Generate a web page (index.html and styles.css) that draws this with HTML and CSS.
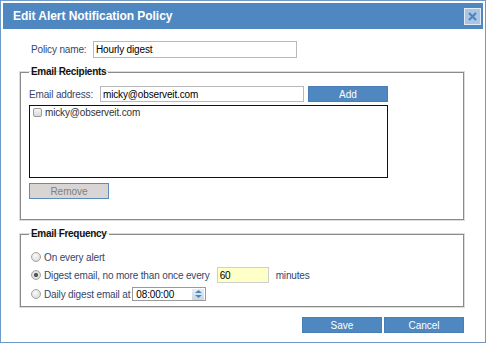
FILE: index.html
```html
<!DOCTYPE html>
<html lang="en">
<head>
    <meta charset="UTF-8">
    <title>Edit Alert Notification Policy</title>
    <link rel="stylesheet" href="styles.css">
</head>
<body>

    <div class="dialog">
        <div class="dialog-header">
            <span class="dialog-title">Edit Alert Notification Policy</span>
            <button class="close-btn" title="Close">
                <svg width="9" height="9" viewBox="0 0 9 9"><path d="M1 1 L8 8 M8 1 L1 8" stroke="#4a86c2" stroke-width="2.2"/></svg>
            </button>
        </div>

        <div class="dialog-body">
            <div class="policy-row">
                <label for="policy-name">Policy name:</label>
                <input type="text" id="policy-name" class="text-input policy-input" value="Hourly digest">
            </div>

            <fieldset class="group">
                <legend>Email Recipients</legend>
                <div class="email-row">
                    <label for="email">Email address:</label>
                    <input type="text" id="email" class="text-input email-input" value="micky@observeit.com">
                    <button class="btn add-btn">Add</button>
                </div>
                <div class="recipient-list">
                    <label class="recipient">
                        <input type="checkbox" class="check">
                        <span>micky@observeit.com</span>
                    </label>
                </div>
                <button class="btn-disabled">Remove</button>
            </fieldset>

            <fieldset class="group freq-group">
                <legend>Email Frequency</legend>
                <label class="radio-row">
                    <input type="radio" name="freq" class="radio">
                    <span>On every alert</span>
                </label>
                <label class="radio-row">
                    <input type="radio" name="freq" class="radio" checked>
                    <span>Digest email, no more than once every</span>
                    <input type="text" class="text-input minutes-input" value="60">
                    <span class="unit">minutes</span>
                </label>
                <label class="radio-row daily-row">
                    <input type="radio" name="freq" class="radio">
                    <span>Daily digest email at</span>
                    <span class="time-input">
                        <span class="time-value">08:00:00</span>
                        <span class="spinner">
                            <svg width="9" height="10" viewBox="0 0 9 10"><path d="M4.5 1 L8 4 L1 4 Z M4.5 9 L8 6 L1 6 Z" fill="#4a86c2"/></svg>
                        </span>
                    </span>
                </label>
            </fieldset>

            <div class="dialog-actions">
                <button class="btn">Save</button>
                <button class="btn">Cancel</button>
            </div>
        </div>
    </div>

</body>
</html>
```

FILE: styles.css
```css
body {
    margin: 0;
    font-family: "Liberation Sans", Arial, sans-serif;
    font-size: 10px;
    letter-spacing: -0.15px;
    color: #34466a;
    background-color: #ffffff;
}

.dialog {
    width: 486px;
    height: 343px;
    box-sizing: border-box;
    border: 1px solid #6e9acb;
    padding: 2px;
    background-color: #ffffff;
}

.dialog-header {
    height: 26px;
    display: flex;
    align-items: center;
    justify-content: space-between;
    padding: 0 2px 0 10px;
    background-color: #4f88c0;
}

.dialog-title {
    color: #ffffff;
    font-size: 12px;
    font-weight: bold;
    letter-spacing: -0.05px;
}

.close-btn {
    width: 17px;
    height: 17px;
    padding: 0;
    display: flex;
    align-items: center;
    justify-content: center;
    border: 1px solid #e3ecf6;
    background-color: #a9c6e4;
    cursor: pointer;
}

.dialog-body {
    padding: 12px 19px 0 17px;
}

.policy-row {
    display: flex;
    align-items: center;
    height: 17px;
    padding-left: 11px;
}

.policy-row label {
    width: 62px;
}

.text-input {
    box-sizing: border-box;
    height: 17px;
    padding: 0 2px;
    border: 1px solid #b9b9b9;
    font-family: "Liberation Sans", Arial, sans-serif;
    font-size: 10px;
    letter-spacing: -0.15px;
    color: #000000;
    outline: none;
}

.policy-input {
    width: 204px;
}

.group {
    margin: 8px 0 0;
    padding: 8px 8px 20px;
    border: 1px solid #8a8a8a;
    box-shadow: 0 0 0 1px #dcdcdc;
    min-inline-size: 0;
}

.group legend {
    padding: 0 2px;
    font-weight: bold;
    letter-spacing: -0.3px;
    color: #111111;
    line-height: 12px;
}

.email-row {
    display: flex;
    align-items: center;
    height: 16px;
}

.email-row label {
    width: 71px;
}

.email-input {
    width: 204px;
    height: 16px;
}

.btn {
    height: 16px;
    width: 80px;
    padding: 0;
    border: 1px solid #4a7fb5;
    background-color: #4f88c0;
    color: #ffffff;
    font-family: "Liberation Sans", Arial, sans-serif;
    font-size: 10px;
    cursor: pointer;
}

.add-btn {
    margin-left: 4px;
}

.recipient-list {
    width: 359px;
    height: 73px;
    box-sizing: border-box;
    margin-top: 3px;
    border: 1px solid #111111;
    padding: 1px 3px;
}

.recipient {
    display: flex;
    align-items: center;
    gap: 3px;
    color: #333333;
}

.check {
    appearance: none;
    width: 9px;
    height: 9px;
    margin: 0;
    border: 1px solid #9a9a9a;
    border-radius: 2px;
    background: linear-gradient(#f6f6f6, #d9d9d9);
}

.btn-disabled {
    display: block;
    width: 80px;
    height: 16px;
    margin-top: 5px;
    padding: 0;
    border: 1px solid #5b8cc0;
    background-color: #d9d5d4;
    color: #7f7f7f;
    font-family: "Liberation Sans", Arial, sans-serif;
    font-size: 10px;
}

.freq-group {
    padding: 9px 8px 4px;
    display: flex;
    flex-direction: column;
    gap: 2px;
}

.radio-row {
    display: flex;
    align-items: center;
    height: 16px;
    padding-left: 2px;
}

.daily-row {
    margin-top: 1px;
}

.radio {
    appearance: none;
    width: 10px;
    height: 10px;
    margin: 0 3px 0 0;
    border: 1px solid #a3a3a3;
    border-radius: 50%;
    background: radial-gradient(circle at 40% 35%, #fafafa, #d3d3d3);
    box-sizing: border-box;
}

.radio:checked {
    background: radial-gradient(circle, #555555 0, #555555 1.8px, #e6e6e6 2.4px, #d0d0d0);
}

.minutes-input {
    width: 52px;
    height: 16px;
    margin-left: 7px;
    background-color: #ffffc8;
    border-color: #cfcfcf;
}

.unit {
    margin-left: 7px;
}

.time-input {
    display: flex;
    align-items: center;
    justify-content: space-between;
    box-sizing: border-box;
    width: 74px;
    height: 14px;
    margin-left: 2px;
    padding: 0 1px 0 3px;
    border: 1px solid #9a9a9a;
    color: #000000;
}

.spinner {
    display: flex;
    align-items: center;
    justify-content: center;
    width: 12px;
    height: 11px;
    background: linear-gradient(#e8eef5, #c9d6e4);
}

.dialog-actions {
    display: flex;
    justify-content: flex-end;
    gap: 2px;
    margin-top: 10px;
}
```
